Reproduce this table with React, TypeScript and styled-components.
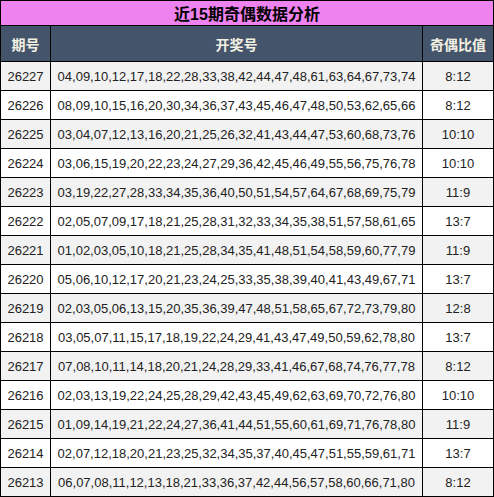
import styled, { createGlobalStyle } from "styled-components";

interface DrawRow {
  issue: string;
  numbers: string;
  ratio: string;
}

const rows: DrawRow[] = [
  { issue: "26227", numbers: "04,09,10,12,17,18,22,28,33,38,42,44,47,48,61,63,64,67,73,74", ratio: "8:12" },
  { issue: "26226", numbers: "08,09,10,15,16,20,30,34,36,37,43,45,46,47,48,50,53,62,65,66", ratio: "8:12" },
  { issue: "26225", numbers: "03,04,07,12,13,16,20,21,25,26,32,41,43,44,47,53,60,68,73,76", ratio: "10:10" },
  { issue: "26224", numbers: "03,06,15,19,20,22,23,24,27,29,36,42,45,46,49,55,56,75,76,78", ratio: "10:10" },
  { issue: "26223", numbers: "03,19,22,27,28,33,34,35,36,40,50,51,54,57,64,67,68,69,75,79", ratio: "11:9" },
  { issue: "26222", numbers: "02,05,07,09,17,18,21,25,28,31,32,33,34,35,38,51,57,58,61,65", ratio: "13:7" },
  { issue: "26221", numbers: "01,02,03,05,10,18,21,25,28,34,35,41,48,51,54,58,59,60,77,79", ratio: "11:9" },
  { issue: "26220", numbers: "05,06,10,12,17,20,21,23,24,25,33,35,38,39,40,41,43,49,67,71", ratio: "13:7" },
  { issue: "26219", numbers: "02,03,05,06,13,15,20,35,36,39,47,48,51,58,65,67,72,73,79,80", ratio: "12:8" },
  { issue: "26218", numbers: "03,05,07,11,15,17,18,19,22,24,29,41,43,47,49,50,59,62,78,80", ratio: "13:7" },
  { issue: "26217", numbers: "07,08,10,11,14,18,20,21,24,28,29,33,41,46,67,68,74,76,77,78", ratio: "8:12" },
  { issue: "26216", numbers: "02,03,13,19,22,24,25,28,29,42,43,45,49,62,63,69,70,72,76,80", ratio: "10:10" },
  { issue: "26215", numbers: "01,09,14,19,21,22,24,27,36,41,44,51,55,60,61,69,71,76,78,80", ratio: "11:9" },
  { issue: "26214", numbers: "02,07,12,18,20,21,23,25,32,34,35,37,40,45,47,51,55,59,61,71", ratio: "13:7" },
  { issue: "26213", numbers: "06,07,08,11,12,13,18,21,33,36,37,42,44,56,57,58,60,66,71,80", ratio: "8:12" },
];

function App(): JSX.Element {
  return (
    <>
      <GlobalStyle />
      <TableWrapper>
        <Title>近15期奇偶数据分析</Title>
        <HeaderRow>
          <HeadCell>期号</HeadCell>
          <HeadCell>开奖号</HeadCell>
          <HeadCell>奇偶比值</HeadCell>
        </HeaderRow>
        {rows.map((row, index) => (
          <DataRow key={row.issue} $striped={index % 2 === 0}>
            <Cell>{row.issue}</Cell>
            <Cell>{row.numbers}</Cell>
            <Cell>{row.ratio}</Cell>
          </DataRow>
        ))}
      </TableWrapper>
    </>
  );
}

export default App;

const GlobalStyle = createGlobalStyle`
  html, body {
    margin: 0;
    padding: 0;
    background: #fff;
  }
  body {
    font-family: "Liberation Sans", Arial, "Noto Sans CJK SC", sans-serif;
  }
`;

const TableWrapper = styled.div`
  width: 494px;
  box-sizing: border-box;
  border-top: 1px solid #000;
  border-right: 1px solid #000;
`;

const Title = styled.div`
  height: 24px;
  border-left: 1px solid #000;
  border-bottom: 1px solid #000;
  background: #ee82ee;
  display: flex;
  align-items: center;
  justify-content: center;
  font-size: 16px;
  font-weight: bold;
  color: #000;
`;

const Grid = styled.div`
  display: grid;
  grid-template-columns: 50px 372px 1fr;
  border-bottom: 1px solid #000;
`;

const HeaderRow = styled(Grid)`
  height: 35px;
  background: #44546a;
`;

const DataRow = styled(Grid)<{ $striped: boolean }>`
  height: 28px;
  background: ${(p) => (p.$striped ? "#f2f2f2" : "#fff")};
`;

const Cell = styled.div`
  border-left: 1px solid #000;
  display: flex;
  align-items: center;
  justify-content: center;
  font-size: 13px;
  color: #222;
  white-space: nowrap;
`;

const HeadCell = styled(Cell)`
  font-size: 14px;
  font-weight: bold;
  color: #f3f0e2;
`;
